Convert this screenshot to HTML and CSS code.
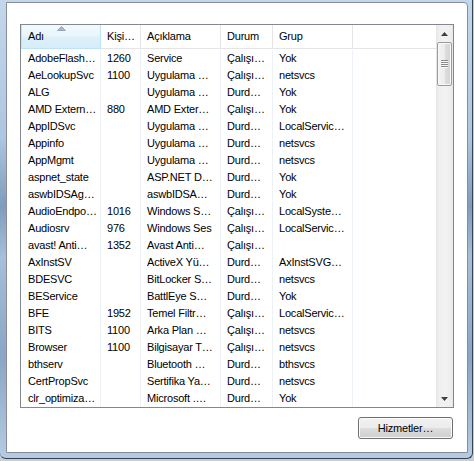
FILE: index.html
```html
<!DOCTYPE html>
<html lang="tr">
<head>
    <meta charset="UTF-8">
    <title>Hizmetler</title>
    <link rel="stylesheet" href="styles.css">
</head>
<body>
    <div class="window">
        <div class="pane">
            <div class="list">
                <div class="table">
                    <div class="head">
                        <div class="col sorted">
                            <svg class="sort-arrow" width="9" height="5" viewBox="0 0 9 5"><path d="M0.5 4.5 L4.5 0.5 L8.5 4.5 Z" fill="#a9b8c8" stroke="#8c9db1" stroke-width="0.8"/></svg>
                            Adı
                        </div>
                        <div class="col">Kişi…</div>
                        <div class="col">Açıklama</div>
                        <div class="col">Durum</div>
                        <div class="col">Grup</div>
                        <div class="col last"></div>
                    </div>
                    <div class="rows">
                        <div class="row"><span class="cell">AdobeFlash…</span><span class="cell">1260</span><span class="cell">Service</span><span class="cell">Çalışı…</span><span class="cell">Yok</span></div>
                        <div class="row"><span class="cell">AeLookupSvc</span><span class="cell">1100</span><span class="cell">Uygulama …</span><span class="cell">Çalışı…</span><span class="cell">netsvcs</span></div>
                        <div class="row"><span class="cell">ALG</span><span class="cell"></span><span class="cell">Uygulama …</span><span class="cell">Durd…</span><span class="cell">Yok</span></div>
                        <div class="row"><span class="cell">AMD Extern…</span><span class="cell">880</span><span class="cell">AMD Exter…</span><span class="cell">Çalışı…</span><span class="cell">Yok</span></div>
                        <div class="row"><span class="cell">AppIDSvc</span><span class="cell"></span><span class="cell">Uygulama …</span><span class="cell">Durd…</span><span class="cell">LocalServic…</span></div>
                        <div class="row"><span class="cell">Appinfo</span><span class="cell"></span><span class="cell">Uygulama …</span><span class="cell">Durd…</span><span class="cell">netsvcs</span></div>
                        <div class="row"><span class="cell">AppMgmt</span><span class="cell"></span><span class="cell">Uygulama …</span><span class="cell">Durd…</span><span class="cell">netsvcs</span></div>
                        <div class="row"><span class="cell">aspnet_state</span><span class="cell"></span><span class="cell">ASP.NET D…</span><span class="cell">Durd…</span><span class="cell">Yok</span></div>
                        <div class="row"><span class="cell">aswbIDSAg…</span><span class="cell"></span><span class="cell">aswbIDSA…</span><span class="cell">Durd…</span><span class="cell">Yok</span></div>
                        <div class="row"><span class="cell">AudioEndpo…</span><span class="cell">1016</span><span class="cell">Windows S…</span><span class="cell">Çalışı…</span><span class="cell">LocalSyste…</span></div>
                        <div class="row"><span class="cell">Audiosrv</span><span class="cell">976</span><span class="cell">Windows Ses</span><span class="cell">Çalışı…</span><span class="cell">LocalServic…</span></div>
                        <div class="row"><span class="cell">avast! Anti…</span><span class="cell">1352</span><span class="cell">Avast Anti…</span><span class="cell">Çalışı…</span><span class="cell"></span></div>
                        <div class="row"><span class="cell">AxInstSV</span><span class="cell"></span><span class="cell">ActiveX Yü…</span><span class="cell">Durd…</span><span class="cell">AxInstSVG…</span></div>
                        <div class="row"><span class="cell">BDESVC</span><span class="cell"></span><span class="cell">BitLocker S…</span><span class="cell">Durd…</span><span class="cell">netsvcs</span></div>
                        <div class="row"><span class="cell">BEService</span><span class="cell"></span><span class="cell">BattlEye S…</span><span class="cell">Durd…</span><span class="cell">Yok</span></div>
                        <div class="row"><span class="cell">BFE</span><span class="cell">1952</span><span class="cell">Temel Filtr…</span><span class="cell">Çalışı…</span><span class="cell">LocalServic…</span></div>
                        <div class="row"><span class="cell">BITS</span><span class="cell">1100</span><span class="cell">Arka Plan …</span><span class="cell">Çalışı…</span><span class="cell">netsvcs</span></div>
                        <div class="row"><span class="cell">Browser</span><span class="cell">1100</span><span class="cell">Bilgisayar T…</span><span class="cell">Çalışı…</span><span class="cell">netsvcs</span></div>
                        <div class="row"><span class="cell">bthserv</span><span class="cell"></span><span class="cell">Bluetooth …</span><span class="cell">Durd…</span><span class="cell">bthsvcs</span></div>
                        <div class="row"><span class="cell">CertPropSvc</span><span class="cell"></span><span class="cell">Sertifika Ya…</span><span class="cell">Durd…</span><span class="cell">netsvcs</span></div>
                        <div class="row"><span class="cell">clr_optimiza…</span><span class="cell"></span><span class="cell">Microsoft .…</span><span class="cell">Durd…</span><span class="cell">Yok</span></div>
                    </div>
                </div>
                <div class="scrollbar">
                    <div class="sb-btn">
                        <svg width="7" height="4" viewBox="0 0 7 4"><path d="M0 4 L3.5 0 L7 4 Z" fill="#3f3f3f"/></svg>
                    </div>
                    <div class="sb-thumb">
                        <svg width="7" height="8" viewBox="0 0 7 8">
                            <rect x="0" y="0" width="7" height="1" fill="#8a8a8a"/><rect x="0" y="1" width="7" height="1" fill="#fafafa"/>
                            <rect x="0" y="2" width="7" height="1" fill="#8a8a8a"/><rect x="0" y="3" width="7" height="1" fill="#fafafa"/>
                            <rect x="0" y="4" width="7" height="1" fill="#8a8a8a"/><rect x="0" y="5" width="7" height="1" fill="#fafafa"/>
                            <rect x="0" y="6" width="7" height="1" fill="#8a8a8a"/><rect x="0" y="7" width="7" height="1" fill="#fafafa"/>
                        </svg>
                    </div>
                    <div class="sb-track"></div>
                    <div class="sb-btn">
                        <svg width="7" height="4" viewBox="0 0 7 4"><path d="M0 0 L7 0 L3.5 4 Z" fill="#3f3f3f"/></svg>
                    </div>
                </div>
            </div>
            <div class="actions">
                <button class="button">Hizmetler…</button>
            </div>
        </div>
    </div>
</body>
</html>
```

FILE: styles.css
```css
body {
    margin: 0;
    padding: 0;
    background: #c9ced5;
    font-family: "Liberation Sans", Arial, sans-serif;
    font-size: 11px;
    letter-spacing: -0.2px;
    color: #000;
}
.window {
    width: 473px;
    height: 459px;
    box-sizing: border-box;
    padding: 2px 4px 5px 6px;
    background: linear-gradient(to bottom, #c3d7ec 0%, #adc6e1 30%, #7f9cbc 45%, #a6bfda 56%, #8aa6c5 78%, #b4cbe3 100%);
    border-right: 1px solid #34414f;
    border-bottom: 1px solid #34414f;
    border-radius: 0 0 6px 6px;
}
.pane {
    height: 100%;
    box-sizing: border-box;
    background: #fff;
    border: 1px solid #898c95;
    border-top-right-radius: 4px;
    padding: 21px 13px 0 13px;
}
.list {
    display: flex;
    height: 384px;
    box-sizing: border-box;
    border: 1px solid #828790;
    overflow: hidden;
}
.table {
    flex: 1;
    overflow: hidden;
}
.head, .row {
    display: grid;
    grid-template-columns: 80px 40px 80px 52px 80px 1fr;
}
.head {
    height: 24px;
    margin-bottom: 1px;
    box-sizing: border-box;
    border-bottom: 1px solid #e5e5e5;
}
.col {
    position: relative;
    line-height: 23px;
    padding-left: 6px;
    white-space: nowrap;
    overflow: hidden;
    border-right: 1px solid #e5e5e5;
    box-sizing: border-box;
}
.col.last {
    border-right: none;
}
.col.sorted {
    padding-left: 7px;
    background: linear-gradient(to bottom, #f1f9fd 0%, #e9f6fc 45%, #dcf0fb 55%, #d6edfa 100%);
    border-right-color: #bfe3f6;
    box-shadow: inset 1px 0 #bfe3f6;
    margin-bottom: -1px;
    border-bottom: 1px solid #bfe3f6;
}
.sort-arrow {
    position: absolute;
    left: 36px;
    top: 1px;
}
.cell {
    line-height: 17px;
    height: 17px;
    padding-left: 6px;
    white-space: nowrap;
    overflow: hidden;
    border-right: 1px solid #edf2f9;
    box-sizing: border-box;
}
.row .cell:first-child {
    padding-left: 7px;
}
.scrollbar {
    width: 17px;
    display: flex;
    flex-direction: column;
    background: linear-gradient(to right, #e3e3e3 0%, #eeeeee 12%, #f2f2f2 50%, #eeeeee 88%, #e6e6e6 100%);
}
.sb-btn {
    height: 17px;
    display: flex;
    align-items: center;
    justify-content: center;
}
.sb-thumb {
    height: 44px;
    margin: 0 1px;
    box-sizing: border-box;
    border: 1px solid #9b9b9b;
    border-radius: 2px;
    background: linear-gradient(to right, #f4f4f4 0%, #ececec 50%, #dedede 51%, #d4d4d4 100%);
    box-shadow: inset 0 0 0 1px #f8f8f8;
    display: flex;
    align-items: center;
    justify-content: center;
}
.sb-track {
    flex: 1;
}
.actions {
    display: flex;
    justify-content: flex-end;
    margin-top: 9px;
    padding-right: 1px;
}
.button {
    width: 95px;
    height: 22px;
    font-family: "Liberation Sans", Arial, sans-serif;
    font-size: 11px;
    letter-spacing: -0.2px;
    color: #000;
    border: 1px solid #707070;
    border-radius: 3px;
    background: linear-gradient(to bottom, #f2f2f2 0%, #ebebeb 50%, #dddddd 51%, #cfcfcf 100%);
    box-shadow: inset 0 0 0 1px #fbfbfb;
    padding: 0;
}
```
